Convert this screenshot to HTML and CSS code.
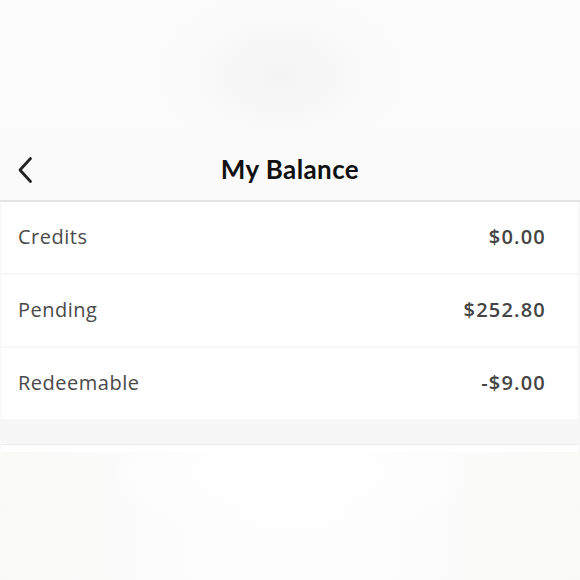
FILE: index.html
```html
<!DOCTYPE html>
<html lang="en">
<head>
<meta charset="utf-8">
<title>My Balance</title>
<link rel="stylesheet" href="styles.css">
</head>
<body>
<div class="screen">
  <div class="backdrop-top"></div>
  <header class="header">
    <button class="back" aria-label="Back">
      <svg width="18" height="28" viewBox="0 0 18 28"><path d="M14.5 2.5 L4 14 L14.5 25.5" fill="none" stroke="#222" stroke-width="2.8" stroke-linecap="round" stroke-linejoin="round"/></svg>
    </button>
    <h1 class="title">My Balance</h1>
  </header>
  <ul class="rows">
    <li class="row"><span class="label">Credits</span><span class="value">$0.00</span></li>
    <li class="row"><span class="label">Pending</span><span class="value">$252.80</span></li>
    <li class="row"><span class="label">Redeemable</span><span class="value">-$9.00</span></li>
  </ul>
  <div class="spacer"></div>
  <div class="next-card"></div>
  <div class="backdrop-bottom"></div>
</div>
</body>
</html>
```
FILE: styles.css
```css
* { box-sizing: border-box; }
html, body { margin: 0; padding: 0; }
body {
  width: 580px;
  height: 580px;
  overflow: hidden;
  background: #f7f7f7;
  font-family: "Open Sans", "Noto Sans", sans-serif;
}
.screen { display: flex; flex-direction: column; height: 580px; }
.backdrop-top {
  height: 128px;
  background:
    radial-gradient(ellipse 135px 90px at 280px 75px, #f4f4f4 0%, #f8f8f8 45%, rgba(252,252,252,0) 100%),
    #fcfcfc;
}
.header {
  height: 74px;
  background: #fafafa;
  border-bottom: 2px solid #e4e4e4;
  display: flex;
  align-items: center;
  justify-content: center;
  position: relative;
}
.back {
  position: absolute;
  left: 16px;
  top: 28px;
  border: 0;
  background: none;
  padding: 0;
  display: flex;
}
.title {
  margin: 0;
  margin-top: 10px;
  font-family: Lato, "Noto Sans", sans-serif;
  font-size: 26px;
  font-weight: 700;
  color: #111;
  letter-spacing: 0.4px;
}
.rows {
  list-style: none;
  margin: 0;
  padding: 0;
  display: flex;
  flex-direction: column;
  gap: 2px;
}
.row {
  height: 71px;
  margin: 0 2px 0 1px;
  background: #fff;
  display: flex;
  align-items: center;
  justify-content: space-between;
  padding: 0 32px 2px 17px;
  font-size: 20px;
}
.label { color: #4a4a4a; letter-spacing: 0.5px; }
.value { color: #444; font-weight: 600; letter-spacing: 1.2px; }
.spacer { height: 25px; }
.next-card {
  height: 8px;
  margin: 0 2px 0 1px;
  background: #fff;
  border-top: 1px solid #ececec;
}
.backdrop-bottom {
  flex: 1;
  background:
    radial-gradient(ellipse 200px 80px at 290px 20px, #ffffff 0%, rgba(255,255,255,0) 100%),
    linear-gradient(90deg, #f9f9f8 0%, #fcfcfc 30%, #fdfdfd 50%, #fcfcfc 70%, #f9f9f8 100%);
}
```
